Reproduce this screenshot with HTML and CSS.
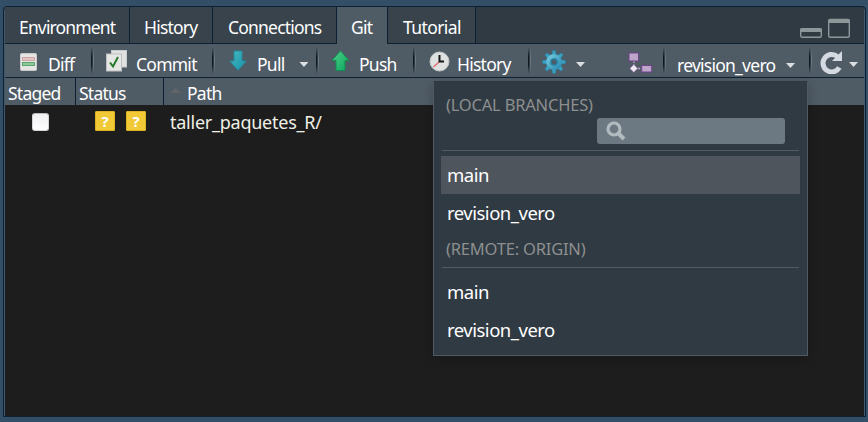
FILE: index.html
```html
<!DOCTYPE html>
<html lang="en">
<head>
<meta charset="utf-8">
<title>Git</title>
<link rel="stylesheet" href="styles.css">
</head>
<body>
<main class="pane">
  <nav class="tabs">
    <span class="tab t-env">Environment</span>
    <span class="tab t-hist">History</span>
    <span class="tab t-conn">Connections</span>
    <span class="tab t-git active">Git</span>
    <span class="tab t-tut">Tutorial</span>
    <svg class="window-buttons" width="52" height="22" viewBox="0 0 52 22">
      <rect x=".7" y="10.7" width="20.600" height="8.600" rx="1.500" fill="#303a43" stroke="#8d9799" stroke-width="1.400"/>
      <path d="M0 14v-2q0-2 2-2h18q2 0 2 2v2z" fill="#8d9799"/>
      <rect x="28.700" y="1.500" width="20.600" height="17.800" rx="1.500" fill="#303a43" stroke="#8d9799" stroke-width="1.400"/>
      <path d="M28 5v-2q0-2 2-2h18q2 0 2 2v2z" fill="#8d9799"/>
    </svg>
  </nav>

  <div class="toolbar">
    <div class="cell c-diff">
      <svg width="18" height="20" viewBox="0 0 18 20"><rect x=".5" y="1.500" width="16" height="17" rx="1" fill="#e5e5e3" stroke="#c8caca"/><rect x="2.500" y="5.500" width="12" height="3" fill="#e0c3c3" stroke="#cfa5a5"/><rect x="2.500" y="10.500" width="12" height="3" fill="#8fc79b" stroke="#5aa56a"/></svg>
      <span>Diff</span>
    </div>
    <div class="cell c-commit">
      <svg width="22" height="22" viewBox="0 0 22 22"><rect x="5.500" y=".5" width="15" height="16.500" fill="#e0e1e1" stroke="#c9cccd"/><rect x=".5" y="4" width="15" height="17" fill="#e6e6e4" stroke="#bcc0c2"/><path d="M4 12.500l3 4 5-9.500" fill="none" stroke="#267a2b" stroke-width="2"/></svg>
      <span>Commit</span>
    </div>
    <div class="cell c-pull">
      <svg width="18" height="21" viewBox="0 0 18 21"><defs><linearGradient id="pull" x2="1" y2="1"><stop stop-color="#49b9c1"/><stop offset="1" stop-color="#1593ac"/></linearGradient></defs><path d="M5 1h8v10h4.200L9 20.300.8 11H5z" fill="url(#pull)" stroke="#248a9b"/></svg>
      <span>Pull</span><i class="caret"></i>
    </div>
    <div class="cell c-push">
      <svg width="19" height="21" viewBox="0 0 19 21"><defs><linearGradient id="push" x2="1" y2="1"><stop stop-color="#54ce88"/><stop offset="1" stop-color="#08a660"/></linearGradient></defs><path d="M9.500.8L18 10.500h-4V20.500H5v-10H1z" fill="url(#push)" stroke="#118e4e"/></svg>
      <span>Push</span>
    </div>
    <div class="cell c-history">
      <svg width="21" height="21" viewBox="0 0 21 21"><circle cx="10.500" cy="10.500" r="9.500" fill="#dfe0e0" stroke="#c3c6c7"/><path d="M10 11l-5.500 5" stroke="#e06464" stroke-width="1.200"/><path d="M10.500 4v6.500H15" fill="none" stroke="#161616" stroke-width="2"/></svg>
      <span>History</span>
    </div>
    <div class="cell c-gear">
      <svg width="24" height="24" viewBox="-12 -12 24 24"><defs><linearGradient id="gear" x2="1" y2="1"><stop stop-color="#7bd0e2"/><stop offset="1" stop-color="#2384ac"/></linearGradient></defs><g fill="#389fc0" stroke="#2c7c99" stroke-width=".5"><path id="tooth" d="M-2.300-7l.9-4.500h2.800l.9 4.500v14l-.9 4.500h-2.800l-.9-4.500z"/><use href="#tooth" transform="rotate(45)"/><use href="#tooth" transform="rotate(90)"/><use href="#tooth" transform="rotate(135)"/></g><circle r="7.800" fill="url(#gear)"/><circle r="3" fill="#4f5b65" stroke="#287c9b" stroke-width="1.500"/></svg>
      <i class="caret"></i>
      <svg class="flow" width="25" height="21" viewBox="0 0 25 21"><path d="M6 9v4m4 3.500h3" stroke="#c1a3cf" stroke-width="1.300" stroke-dasharray="2 1"/><rect x="1" y="1" width="9.500" height="8" fill="#bda5c9" stroke="#70418d"/><path d="M5.800 12.400l4 4-4 4-4-4z" fill="#efe9f3" stroke="#70418d" stroke-width=".5"/><rect x="13.700" y="13.500" width="10" height="6.500" fill="#bda5c9" stroke="#70418d"/></svg>
    </div>
    <div class="cell c-branch"><span>revision_vero</span><i class="caret"></i></div>
    <div class="cell c-refresh">
      <svg width="23" height="24" viewBox="0 0 23 24"><path d="M17.300 6.500A8.700 8.700 0 1 0 19.300 17.500" fill="none" stroke="#d5d9e2" stroke-width="5"/><path d="M22 1v10h-10z" fill="#d5d9e2"/></svg>
      <i class="caret"></i>
    </div>
  </div>

  <div class="table-head"><span class="staged">Staged</span><span class="status">Status</span><span class="path"><i class="sort"></i><b>Path</b></span></div>
  <div class="table-row">
    <i class="check"></i>
    <div class="badges"><span>?</span><span>?</span></div>
    <span class="file">taller_paquetes_R/</span>
  </div>
</main>

<aside class="menu">
  <div class="group local">(LOCAL BRANCHES)</div>
  <div class="search"><svg width="22" height="22" viewBox="0 0 22 22"><circle cx="8" cy="8" r="6" fill="none" stroke="#b2bbc0" stroke-width="3.200"/><path d="M12.500 12.500l5.500 5.500" stroke="#b2bbc0" stroke-width="4"/></svg></div>
  <div class="rule"></div>
  <div class="item selected"><span>main</span></div>
  <div class="item"><span>revision_vero</span></div>
  <div class="group remote">(REMOTE: ORIGIN)</div>
  <div class="rule"></div>
  <div class="item"><span>main</span></div>
  <div class="item"><span>revision_vero</span></div>
</aside>
</body>
</html>
```
FILE: styles.css
```css
* { box-sizing: border-box; }
body {
  margin: 0;
  width: 868px;
  height: 422px;
  overflow: hidden;
  background: #334e67;
  color: #fff;
  font: 17.5px/24px "Noto Sans", "Open Sans", sans-serif;
}
span, b { white-space: nowrap; font-weight: 400; }
svg { display: block; flex: none; }

.pane {
  width: 863px;
  height: 411px;
  margin: 6px 0 0 3px;
  border: 1px solid #0d2133;
  border-radius: 4px 4px 0 0;
  background: #1d1d1d;
  box-shadow: inset 1px 0 #40596e, inset -1px 0 #40596e;
  padding: 0 1px;
}
.tabs {
  display: flex;
  height: 37px;
  border-bottom: 1px solid #0d2133;
  background: #303a43;
  border-radius: 3px 3px 0 0;
}
.tab {
  height: 36px;
  padding-top: 8px;
  background: #38434c;
  border-right: 1px solid #0d2133;
}
.tab.active { height: 37px; background: #4f5b65; }
.tab { letter-spacing: -.85px; }
.t-env { width: 125px; padding-left: 14px; }
.t-hist { width: 83px; padding-left: 14px; letter-spacing: -.8px; }
.t-conn { width: 124px; padding-left: 15px; letter-spacing: -.8px; }
.t-git { width: 51px; padding-left: 14px; letter-spacing: -.8px; }
.t-tut { width: 88px; padding-left: 15px; letter-spacing: -.6px; }
.window-buttons { margin: 11px 12px 0 auto; }

.toolbar {
  display: grid;
  grid-template-columns: 86px 121px 104px 97px 115px 135px 146px 1fr;
  height: 34px;
  border-bottom: 1px solid #0d2133;
  background: #4f5b65;
}
.cell { display: flex; align-items: flex-start; letter-spacing: -.75px; }
.cell + .cell {
  background: linear-gradient(transparent, #10181f 35%, #10181f 65%, transparent) 0 3px / 1.5px 27px no-repeat,
    linear-gradient(transparent, #707b84, transparent) 2px 3px / 1px 27px no-repeat;
}
.caret {
  width: 9px;
  height: 5px;
  background: #dcdfe2;
  clip-path: polygon(0 0, 100% 0, 50% 100%);
}
.c-diff { padding: 8px 0 0 15px; gap: 10px; }
.c-commit { padding: 6px 0 0 15px; gap: 8px; }
.c-commit span, .c-pull span, .c-push span { margin-top: 2px; }
.c-pull { padding: 6px 0 0 17px; gap: 10px; }
.c-pull .caret { margin: 12px 0 0 5px; }
.c-push { padding: 6px 0 0 15px; gap: 9px; }
.c-history { padding: 7px 0 0 16px; gap: 7px; }
.c-history span { margin-top: 1px; }
.c-gear { padding: 6px 0 0 14px; }
.c-gear .caret { margin: 12px 0 0 10px; }
.c-gear .flow { margin: 2px 0 0 43px; }
.c-branch { padding-left: 14px; }
.c-branch span { width: 109px; margin-top: 9px; }
.c-branch .caret { margin-top: 19px; }
.c-refresh { padding: 6px 0 0 11px; }
.c-refresh .caret { margin: 12px 0 0 6px; }

.table-head {
  display: grid;
  grid-template-columns: 71px 88px 1fr;
  height: 27px;
  background: #4f5b65;
  letter-spacing: -.75px;
}
.staged, .status { border-right: 1px solid #0d2133; padding: 3px 0 0 3px; }
.path { display: flex; padding-top: 3px; }
.sort { width: 11px; height: 5px; margin: 7px 6px 0; background: #626568; clip-path: polygon(50% 0, 100% 100%, 0 100%); }
.table-row { display: flex; height: 36px; font-size: 18px; letter-spacing: -.25px; }
.check {
  width: 17px;
  height: 18px;
  margin: 8px 0 0 27px;
  border-radius: 3px;
  background: linear-gradient(#f0f0f4, #fff);
  border: 1px solid #d5d5d7;
  border-top-color: #b9b9bb;
}
.badges { display: flex; gap: 11px; width: 75px; margin: 6px 0 0 46px; }
.badges span {
  width: 20px;
  height: 20px;
  border: 1px solid #dbb323;
  border-radius: 1px;
  background: #f1c936;
  font: 700 15px/18px "Open Sans", sans-serif;
  letter-spacing: 0;
  text-align: center;
}
.file { margin-top: 5px; color: #f1f1e6; }

.menu {
  position: absolute;
  left: 433px;
  top: 81px;
  width: 375px;
  height: 275px;
  border: 1px solid #4e5b66;
  border-top-color: #303a43;
  background: #303a43;
  box-shadow: 0 3px 10px rgba(0, 0, 0, .2);
  padding: 11px 7px 0;
}
.group { height: 24px; padding-left: 5px; font-size: 16.5px; color: #8d8f8f; letter-spacing: -.2px; }
.search {
  width: 188px;
  height: 26px;
  margin: 1px 0 6px 156px;
  padding: 3px 0 0 9px;
  border-radius: 3px;
  background: #6d7982;
}
.rule { height: 1px; margin: 0 1px 5px; background: #4f5b65; }
.item { height: 38px; padding: 7px 0 0 6px; font-size: 18.5px; color: #fff; letter-spacing: -.5px; }
.selected { background: #4f555d; }
.remote { margin-top: 5px; height: 30px; }
```
